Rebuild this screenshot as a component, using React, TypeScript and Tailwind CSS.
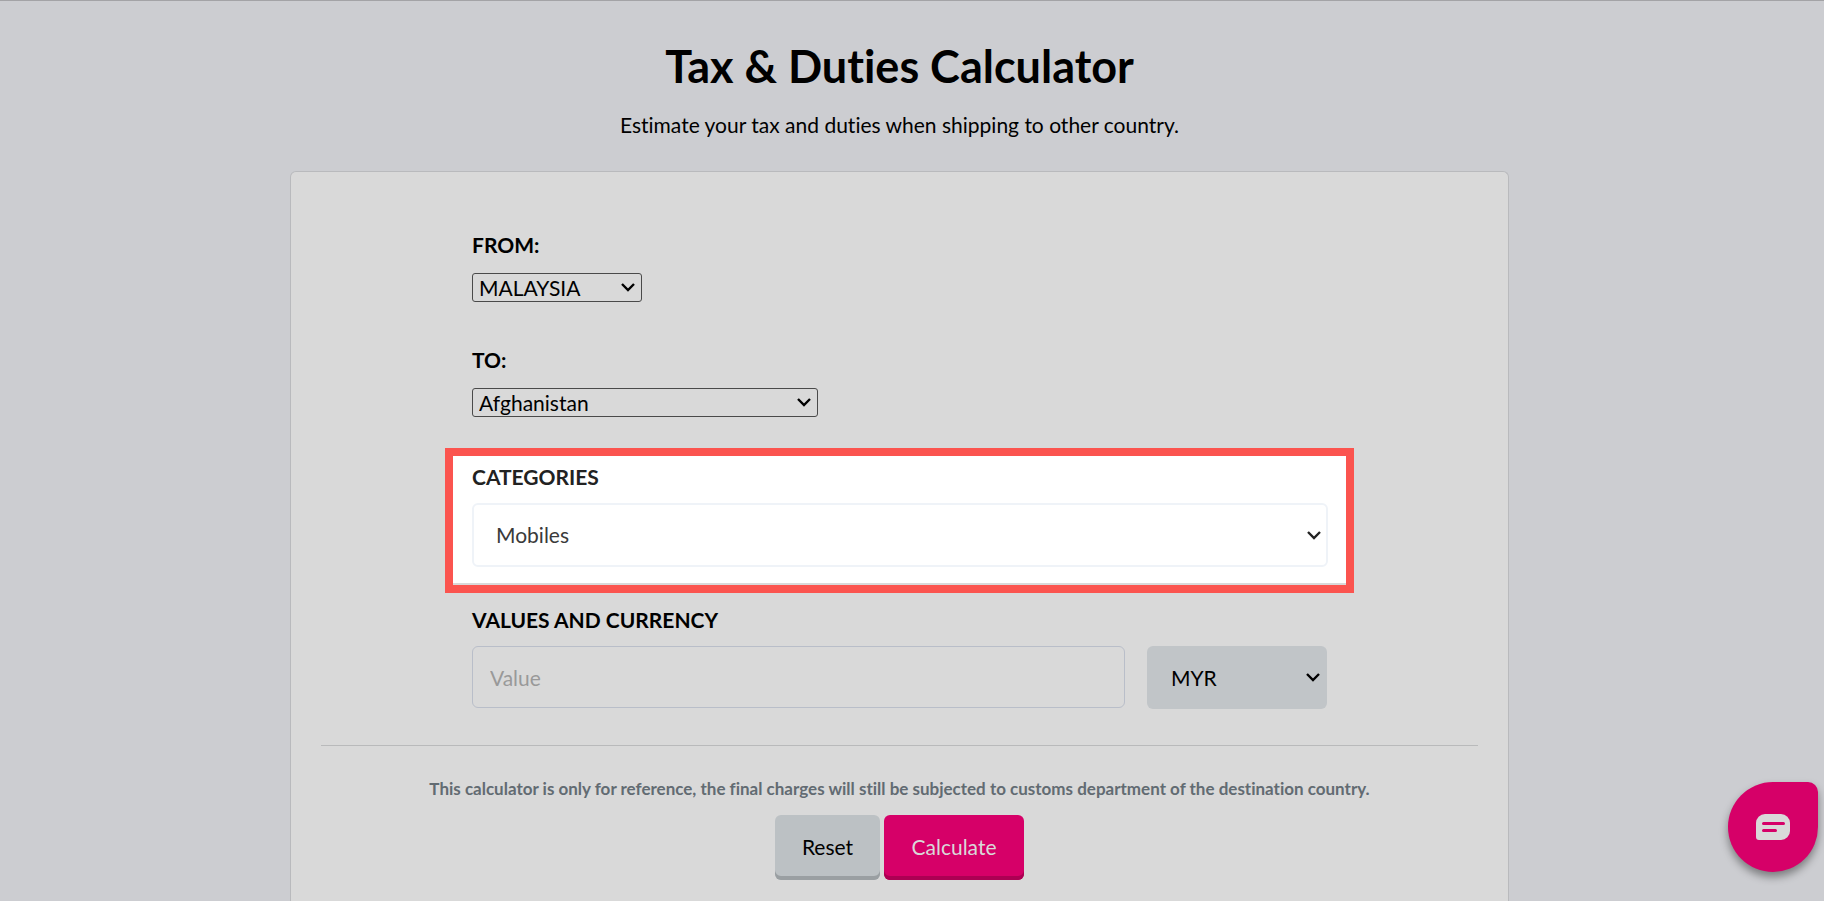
import type { ReactNode, SelectHTMLAttributes } from 'react';

type SelectFieldProps = SelectHTMLAttributes<HTMLSelectElement> & {
  options: string[];
  wrapperClass?: string;
};

function SelectField({ options, wrapperClass = '', className = '', ...rest }: SelectFieldProps) {
  return (
    <div className={`grid items-center ${wrapperClass}`}>
      <select {...rest} className={`col-start-1 row-start-1 w-full appearance-none ${className}`}>
        {options.map((o) => (
          <option key={o}>{o}</option>
        ))}
      </select>
      <svg
        viewBox="0 0 14 9"
        className="pointer-events-none col-start-1 row-start-1 mr-[7px] h-[9px] w-[14px] justify-self-end"
        fill="none"
        stroke="currentColor"
        strokeWidth="2.4"
        aria-hidden="true"
      >
        <path d="M1 1l6 6 6-6" />
      </svg>
    </div>
  );
}

function FieldLabel({ htmlFor, children }: { htmlFor: string; children: ReactNode }) {
  return (
    <label htmlFor={htmlFor} className="block leading-[34px] font-bold">
      {children}
    </label>
  );
}

function ChatButton() {
  return (
    <button
      type="button"
      aria-label="Open chat"
      className="fixed right-[6px] bottom-[29px] flex size-[90px] items-center justify-center rounded-[45px] rounded-tr-[10px] bg-[#d60068] shadow-[0_5px_8px_rgba(0,0,0,0.4)]"
    >
      <svg viewBox="0 0 34 26" className="h-[26px] w-[34px]" aria-hidden="true">
        <path d="M9 0h16a9 9 0 0 1 9 9v8a9 9 0 0 1-9 9H3a3 3 0 0 1-3-3V9a9 9 0 0 1 9-9z" fill="#d9d9d9" />
        <path d="M7.5 9.5h20M7.5 16.5h12" stroke="#d60068" strokeWidth="3" strokeLinecap="round" />
      </svg>
    </button>
  );
}

export default function App() {
  return (
    <div className="flex min-h-screen flex-col border-t border-[#a3a3a6] bg-[#cccdd1] pr-[25px] font-['Lato',sans-serif] text-[21px] text-black [font-variant-ligatures:no-common-ligatures]">
      <header className="px-4 pt-[37px] pb-[29px] text-center">
        <h1 className="text-[45px] leading-[56px] font-bold">Tax &amp; Duties Calculator</h1>
        <p className="mt-[14px] leading-[34px]">Estimate your tax and duties when shipping to other country.</p>
      </header>

      <main className="mx-auto flex w-full max-w-[1219px] flex-1 flex-col rounded-t-[6px] border border-b-0 border-[#b9babd] bg-[#d9d9d9] px-[30px] pt-[56px] pb-[20px]">
        <form>
          <div className="mx-auto max-w-[909px]">
            <div className="px-[27px]">
              <FieldLabel htmlFor="from">FROM:</FieldLabel>
              <SelectField
                id="from"
                options={['MALAYSIA']}
                wrapperClass="mt-[11px] w-[170px]"
                className="h-[29px] rounded-[3px] border border-[#4a4a4a] px-[6px] leading-[27px]"
              />
            </div>
            <div className="mt-[41px] px-[27px]">
              <FieldLabel htmlFor="to">TO:</FieldLabel>
              <SelectField
                id="to"
                options={['Afghanistan']}
                wrapperClass="mt-[11px] w-[346px]"
                className="h-[29px] rounded-[3px] border border-[#4a4a4a] px-[6px] leading-[27px]"
              />
            </div>

            <div className="mt-[31px] border-8 border-[#fb544f]">
              <div className="border-b-2 border-[#d9d9d9] bg-white pt-[4px] pr-[18px] pb-[16px] pl-[19px] text-[#222]">
                <FieldLabel htmlFor="category">CATEGORIES</FieldLabel>
                <SelectField
                  id="category"
                  options={['Mobiles']}
                  wrapperClass="mt-[9px]"
                  className="h-[64px] rounded-[6px] border-2 border-[#eff3f8] px-[22px] text-[#3a3a3a]"
                />
              </div>
            </div>

            <div className="mt-[10px] px-[27px]">
              <FieldLabel htmlFor="value">VALUES AND CURRENCY</FieldLabel>
              <div className="mt-[9px] flex items-start gap-[22px]">
                <input
                  id="value"
                  type="text"
                  placeholder="Value"
                  className="h-[62px] min-w-0 flex-1 rounded-[6px] border border-[#b9bec9] px-[17px] placeholder:text-[#999]"
                />
                <SelectField
                  aria-label="Currency"
                  options={['MYR']}
                  wrapperClass="w-[180px]"
                  className="h-[63px] rounded-[6px] bg-[#c1c5c8] px-[24px]"
                />
              </div>
            </div>
          </div>

          <hr className="mt-[36px] border-[#b9babb]" />

          <p className="mt-[29px] text-center text-[17px] leading-[28px] font-bold text-[#626b72]">
            This calculator is only for reference, the final charges will still be subjected to customs department of the
            destination country.
          </p>
          <div className="mt-[12px] flex justify-center gap-[4px]">
            <button
              type="reset"
              className="h-[65px] w-[105px] rounded-[6px] bg-[#bcc1c4] pb-[2px] shadow-[inset_0_-4px_0_#9a9fa2]"
            >
              Reset
            </button>
            <button
              type="button"
              className="h-[65px] w-[140px] rounded-[6px] bg-[#d60068] pb-[2px] text-[#d9d9d9] shadow-[inset_0_-4px_0_#ac0053]"
            >
              Calculate
            </button>
          </div>
        </form>
      </main>

      <ChatButton />
    </div>
  );
}
